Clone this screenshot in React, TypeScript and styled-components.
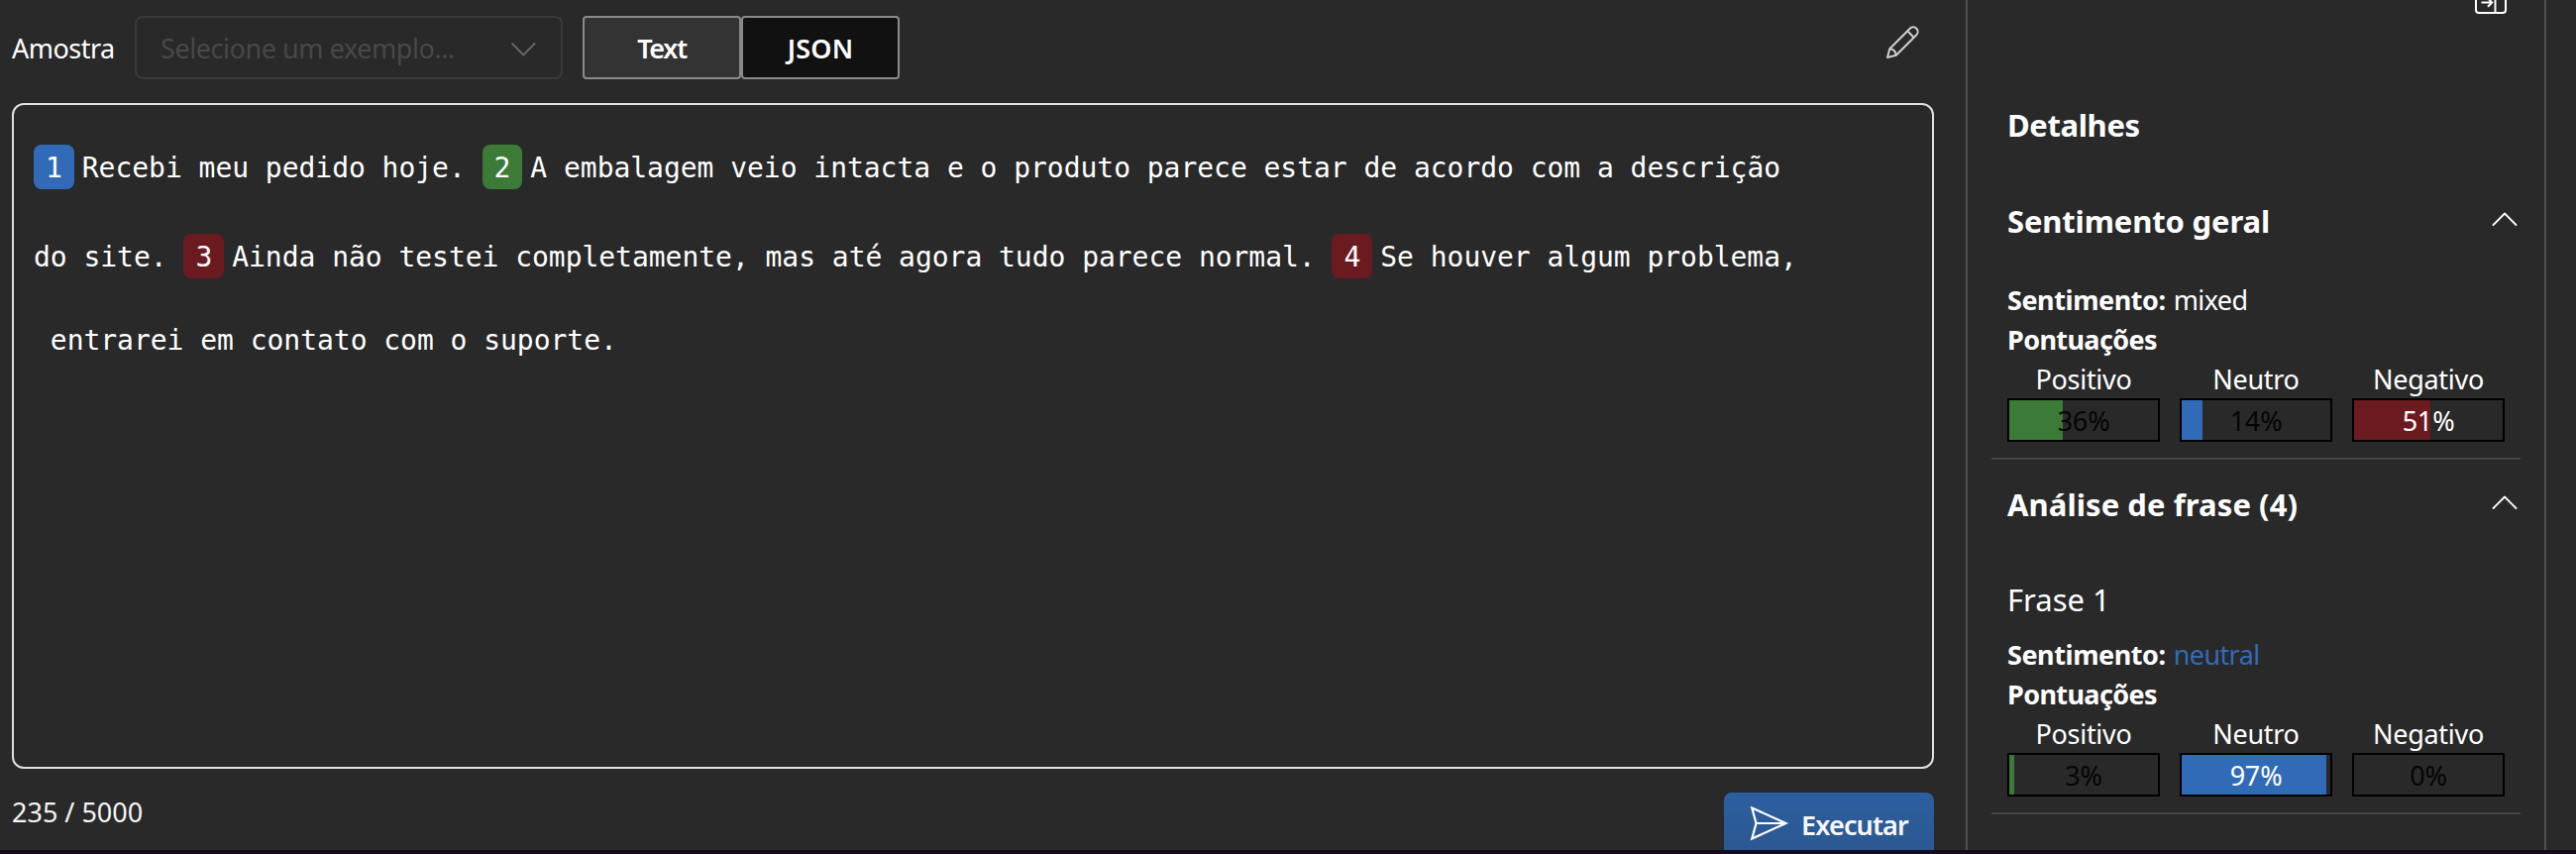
import React from "react";
import styled, { createGlobalStyle } from "styled-components";

type Tone = "positive" | "neutral" | "negative";

const tones: Record<Tone, string> = {
  positive: "#3b7a37",
  neutral: "#316bb8",
  negative: "#6b1a1f",
};

const GlobalStyle = createGlobalStyle`
  * { box-sizing: border-box; }
  body {
    margin: 0;
    background: #292929;
    color: #ffffff;
    font-family: "Noto Sans", "Open Sans", sans-serif;
    font-size: 27px;
    line-height: 40px;
    overflow: hidden;
  }
`;

const Page = styled.div`
  display: flex;
  flex-direction: column;
  width: 2600px;
  height: 862px;
  overflow: hidden;
`;

const Content = styled.div`
  display: flex;
  flex: 1;
  min-height: 0;
  overflow: hidden;
`;

const BottomEdge = styled.div`
  flex: none;
  height: 4px;
  background: #150b1d;
`;

const Workspace = styled.main`
  display: flex;
  flex-direction: column;
  flex: none;
  width: 1984px;
  padding: 16px 32px 0 12px;
`;

const Toolbar = styled.div`
  display: flex;
  flex: none;
  align-items: center;
  height: 64px;
  margin-bottom: 24px;
`;

const SampleLabel = styled.label`
  width: 124px;
  padding-top: 1px;
  letter-spacing: -0.52px;
  white-space: nowrap;
`;

const SampleSelect = styled.div`
  display: flex;
  align-items: center;
  justify-content: space-between;
  width: 432px;
  height: 64px;
  padding: 1px 24px 0 24px;
  margin-right: 20px;
  border: 2px solid #3a3a3a;
  border-radius: 8px;
  color: #484848;
  letter-spacing: -0.44px;
  white-space: nowrap;
`;

const FormatSwitch = styled.div`
  display: flex;
`;

const FormatButton = styled.button<{ $active?: boolean; $spacing: string }>`
  width: 160px;
  height: 64px;
  padding: 1px 0 0;
  border: 2px solid #8a8a8a;
  border-radius: 4px;
  background: ${(p) => (p.$active ? "#333333" : "#111111")};
  color: #ffffff;
  font: 600 27px/40px "Noto Sans", sans-serif;
  letter-spacing: ${(p) => p.$spacing};
`;

const EditButton = styled.button`
  display: flex;
  margin: 0 15px 10px auto;
  padding: 0;
  border: 0;
  background: none;
  color: #cfcfcf;
`;

const Editor = styled.section`
  flex: none;
  height: 672px;
  padding: 40px 20px 0;
  border: 2px solid #e0e0e0;
  border-radius: 12px;
  font-family: "DejaVu Sans Mono", "Liberation Mono", monospace;
  font-size: 28px;
  letter-spacing: -0.035px;
`;

const EditorLine = styled.div<{ $last?: boolean }>`
  display: flex;
  align-items: center;
  height: 45px;
  margin-bottom: ${(p) => (p.$last ? 0 : 45)}px;
  margin-top: ${(p) => (p.$last ? -6 : 0)}px;
  line-height: 45px;
  white-space: pre;
`;

const EditorText = styled.span`
  padding-top: 2px;
`;

const SentenceBadge = styled.span<{ $tone: Tone }>`
  width: 40.8px;
  height: 45px;
  padding-top: 1px;
  margin-right: 8px;
  border-radius: 8px;
  background: ${(p) => tones[p.$tone]};
  text-align: center;
`;

const Footer = styled.footer`
  display: flex;
  flex: none;
  justify-content: space-between;
  padding-top: 24px;
`;

const Counter = styled.span`
  color: #f4f4f4;
`;

const RunButton = styled.button`
  display: flex;
  align-items: center;
  gap: 12px;
  flex: none;
  width: 212px;
  height: 64px;
  padding: 0 0 0 26px;
  border: 0;
  border-radius: 8px;
  background: linear-gradient(#2c5fa1, #2b578f);
  color: #f8f8f8;
  font: 600 27px/40px "Noto Sans", sans-serif;
  letter-spacing: -0.85px;
`;

const RunLabel = styled.span`
  padding-top: 1px;
`;

const DetailsPanel = styled.aside`
  flex: none;
  width: 586px;
  padding: 0 24px;
  border-left: 2px solid #4f4f4f;
  border-right: 2px solid #4f4f4f;
`;

const PanelActions = styled.div`
  display: flex;
  justify-content: flex-end;
  height: 14px;
  align-items: flex-end;
  padding-right: 14px;
`;

const PanelTitle = styled.h2`
  height: 44px;
  margin: 90px 16px 0;
  font-size: 31px;
  line-height: 44px;
  letter-spacing: -0.37px;
`;

const Section = styled.section<{ $spaced?: boolean }>`
  margin-top: ${(p) => (p.$spaced ? 24 : 54)}px;
`;

const SectionHeader = styled.div`
  display: flex;
  align-items: center;
  justify-content: space-between;
  height: 44px;
  padding: 0 3px 0 16px;
`;

const SectionTitle = styled.h3<{ $spacing: string }>`
  margin: -2px 0 0;
  font-size: 31px;
  line-height: 44px;
  letter-spacing: ${(p) => p.$spacing};
`;

const ChevronSlot = styled.span`
  display: flex;
  padding-bottom: 6px;
`;

const SentimentBlock = styled.div<{ $top: number }>`
  padding: ${(p) => p.$top}px 16px 16px;
  border-bottom: 2px solid #444444;
`;

const PhraseTitle = styled.h4`
  height: 44px;
  margin: 0 0 13px;
  font-size: 31px;
  line-height: 44px;
  font-weight: 400;
`;

const Row = styled.div`
  display: flex;
  height: 40px;
  padding-top: 1px;
  gap: 8px;
  white-space: nowrap;
`;

const Term = styled.strong<{ $tight?: boolean }>`
  font-weight: 700;
  letter-spacing: ${(p) => (p.$tight ? "-0.62px" : "-0.44px")};
`;

const Value = styled.span<{ $tone?: Tone }>`
  color: ${(p) => (p.$tone ? tones[p.$tone] : "#ffffff")};
  letter-spacing: -0.6px;
`;

const ScoreGrid = styled.div`
  display: grid;
  grid-template-columns: repeat(3, 154px);
  column-gap: 20px;
  text-align: center;
`;

const ScoreLabel = styled.div`
  height: 40px;
  padding-top: 1px;
  letter-spacing: -0.3px;
`;

const Meter = styled.div<{ $light?: boolean }>`
  position: relative;
  height: 44px;
  border: 2px solid #000000;
  color: ${(p) => (p.$light ? "#ffffff" : "#050505")};
`;

const MeterFill = styled.div<{ $tone: Tone }>`
  height: 100%;
  background: ${(p) => tones[p.$tone]};
`;

const MeterText = styled.span`
  position: absolute;
  inset: 0;
  padding-top: 1px;
  line-height: 40px;
  letter-spacing: -0.2px;
`;

const ChevronUp = () => (
  <ChevronSlot>
    <svg width="26" height="16" viewBox="0 0 26 16" fill="none" stroke="#ffffff" strokeWidth="1.8" strokeLinecap="round" strokeLinejoin="round">
      <path d="M1.500 14 13 2.500 24.500 14" />
    </svg>
  </ChevronSlot>
);

const ChevronDown = () => (
  <svg width="26" height="16" viewBox="0 0 26 16" fill="none" stroke="#686868" strokeWidth="1.8" strokeLinecap="round" strokeLinejoin="round">
    <path d="M1 3 12.300 14.500 23.600 3" />
  </svg>
);

const PencilIcon = () => (
  <svg width="34" height="34" viewBox="0 0 34 34" fill="none" stroke="currentColor" strokeWidth="2" strokeLinejoin="round">
    <path d="M2 32 4.300 23.200 24.800 2.700a4.500 4.500 0 0 1 6.500 6.500L10.800 29.700Z" />
    <path d="M22.200 5.300 28.700 11.800M4.300 23.200c3.500.3 6 2.800 6.500 6.500" />
  </svg>
);

const CollapseIcon = () => (
  <svg width="32" height="28" viewBox="0 0 32 28" fill="none" stroke="#ffffff" strokeWidth="2">
    <rect x="1" y="1" width="30" height="26" rx="3" />
    <path d="M20.500 1V27M6.500 16.500H17M13 12.300 17.200 16.500 13 20.700" />
  </svg>
);

const SendIcon = () => (
  <svg width="40" height="36" viewBox="0 0 40 36" fill="none" stroke="#ffffff" strokeWidth="2.200">
    <path d="M2.300 1.500 36.500 17 2.300 32.500 6.500 17ZM6.500 17H34" />
  </svg>
);

interface Score {
  label: string;
  value: number;
  tone: Tone;
}

const overall: Score[] = [
  { label: "Positivo", value: 36, tone: "positive" },
  { label: "Neutro", value: 14, tone: "neutral" },
  { label: "Negativo", value: 51, tone: "negative" },
];

const firstPhrase: Score[] = [
  { label: "Positivo", value: 3, tone: "positive" },
  { label: "Neutro", value: 97, tone: "neutral" },
  { label: "Negativo", value: 0, tone: "negative" },
];

const Scores = ({ items }: { items: Score[] }) => (
  <ScoreGrid>
    {items.map((s) => (
      <div key={s.label}>
        <ScoreLabel>{s.label}</ScoreLabel>
        <Meter $light={s.value > 50}>
          <MeterFill $tone={s.tone} style={{ width: `${s.value}%` }} />
          <MeterText>{s.value}%</MeterText>
        </Meter>
      </div>
    ))}
  </ScoreGrid>
);

export default function App() {
  return (
    <Page>
      <GlobalStyle />
      <Content>
        <Workspace>
          <Toolbar>
            <SampleLabel>Amostra</SampleLabel>
            <SampleSelect>
              Selecione um exemplo...
              <ChevronDown />
            </SampleSelect>
            <FormatSwitch>
              <FormatButton $active $spacing="-1.3px">Text</FormatButton>
              <FormatButton $spacing="0.19px">JSON</FormatButton>
            </FormatSwitch>
            <EditButton aria-label="Editar">
              <PencilIcon />
            </EditButton>
          </Toolbar>
          <Editor>
            <EditorLine>
              <SentenceBadge $tone="neutral">1</SentenceBadge>
              <EditorText>{"Recebi meu pedido hoje. "}</EditorText>
              <SentenceBadge $tone="positive">2</SentenceBadge>
              <EditorText>A embalagem veio intacta e o produto parece estar de acordo com a descrição</EditorText>
            </EditorLine>
            <EditorLine>
              <EditorText>{"do site. "}</EditorText>
              <SentenceBadge $tone="negative">3</SentenceBadge>
              <EditorText>{"Ainda não testei completamente, mas até agora tudo parece normal. "}</EditorText>
              <SentenceBadge $tone="negative">4</SentenceBadge>
              <EditorText>Se houver algum problema,</EditorText>
            </EditorLine>
            <EditorLine $last>
              <EditorText>{" entrarei em contato com o suporte."}</EditorText>
            </EditorLine>
          </Editor>
          <Footer>
            <Counter>235 / 5000</Counter>
            <RunButton>
              <SendIcon />
              <RunLabel>Executar</RunLabel>
            </RunButton>
          </Footer>
        </Workspace>
        <DetailsPanel>
          <PanelActions>
            <CollapseIcon />
          </PanelActions>
          <PanelTitle>Detalhes</PanelTitle>
          <Section>
            <SectionHeader>
              <SectionTitle $spacing="-0.15px">Sentimento geral</SectionTitle>
              <ChevronUp />
            </SectionHeader>
            <SentimentBlock $top={36}>
              <Row>
                <Term>Sentimento:</Term>
                <Value>mixed</Value>
              </Row>
              <Row>
                <Term $tight>Pontuações</Term>
              </Row>
              <Scores items={overall} />
            </SentimentBlock>
          </Section>
          <Section $spaced>
            <SectionHeader>
              <SectionTitle $spacing="0.07px">Análise de frase (4)</SectionTitle>
              <ChevronUp />
            </SectionHeader>
            <SentimentBlock $top={51}>
              <PhraseTitle>Frase 1</PhraseTitle>
              <Row>
                <Term>Sentimento:</Term>
                <Value $tone="neutral">neutral</Value>
              </Row>
              <Row>
                <Term $tight>Pontuações</Term>
              </Row>
              <Scores items={firstPhrase} />
            </SentimentBlock>
          </Section>
        </DetailsPanel>
      </Content>
      <BottomEdge />
    </Page>
  );
}
